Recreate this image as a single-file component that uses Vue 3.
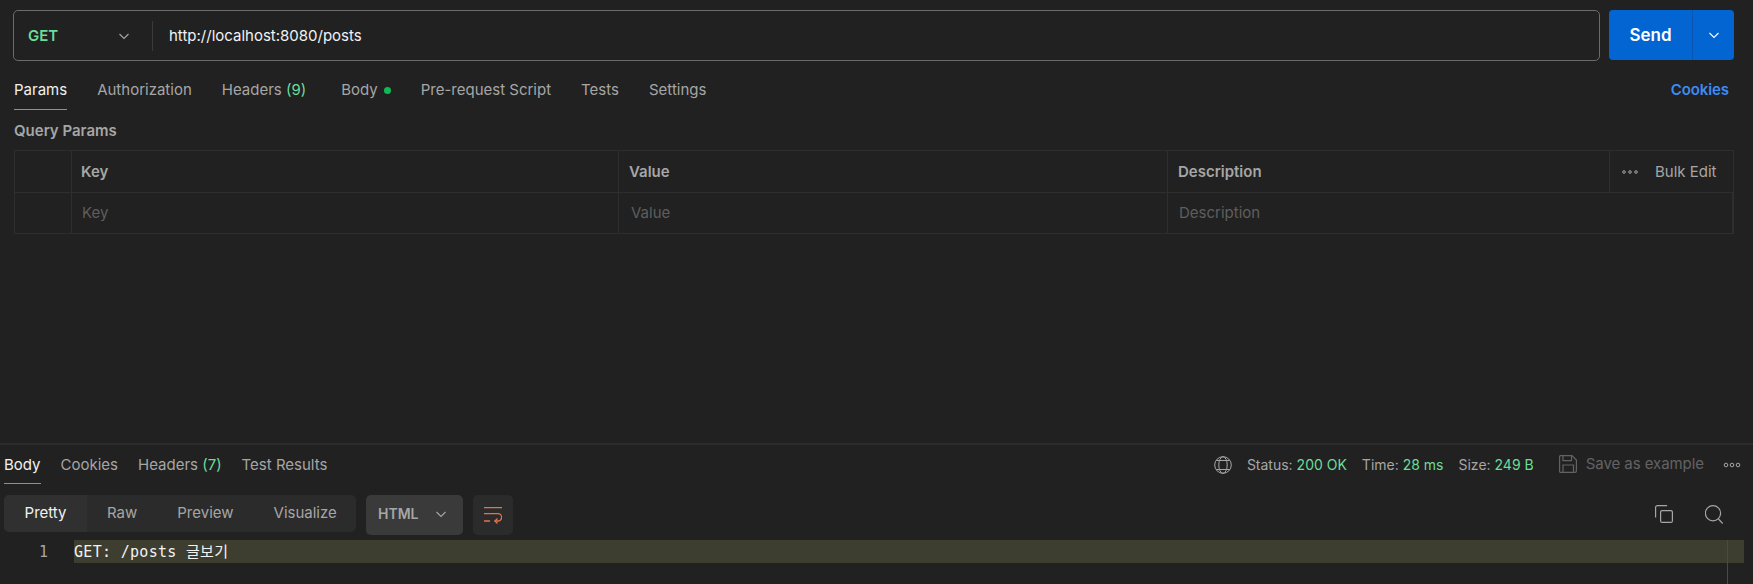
<script setup>
</script>

<template>
  <div class="app">
    <section class="request">
      <div class="urlrow">
        <div class="urlbar">
          <div class="method">
            <span class="get">GET</span>
            <svg class="chev" width="12" height="12" viewBox="0 0 12 12"><path d="M1.5 4l4.500 4.500L10.500 4" fill="none" stroke="#a6a6a6" stroke-width="1.100"/></svg>
          </div>
          <div class="url">http://localhost:8080/posts</div>
        </div>
        <div class="send">
          <span class="sendlabel">Send</span>
          <span class="sendmore"><svg width="12" height="12" viewBox="0 0 12 12"><path d="M1.500 4l4.500 4.500L10.500 4" fill="none" stroke="#fff" stroke-width="1.100"/></svg></span>
        </div>
      </div>

      <div class="reqtabs">
        <span class="tab active">Params</span>
        <span class="tab">Authorization</span>
        <span class="tab hdr">Headers <em>(9)</em></span>
        <span class="tab">Body<i class="dot"></i></span>
        <span class="tab">Pre-request Script</span>
        <span class="tab">Tests</span>
        <span class="tab">Settings</span>
        <span class="cookies">Cookies</span>
      </div>

      <div class="qp">Query Params</div>

      <div class="table">
        <div class="row head">
          <div class="cell c0"></div>
          <div class="cell c1">Key</div>
          <div class="cell c2">Value</div>
          <div class="cell c3">Description</div>
          <div class="cell c4">
            <svg class="dots" width="16" height="4" viewBox="0 0 16 4"><circle cx="2" cy="2" r="1.300"/><circle cx="8" cy="2" r="1.300"/><circle cx="14" cy="2" r="1.300"/></svg>
            <span class="bulk">Bulk Edit</span>
          </div>
        </div>
        <div class="row ph">
          <div class="cell c0"></div>
          <div class="cell c1">Key</div>
          <div class="cell c2">Value</div>
          <div class="cell c3w">Description</div>
        </div>
      </div>
    </section>

    <section class="response">
      <div class="restop">
        <div class="restabs">
          <span class="rtab active">Body</span>
          <span class="rtab">Cookies</span>
          <span class="rtab">Headers <em>(7)</em></span>
          <span class="rtab">Test Results</span>
        </div>
        <div class="stats">
          <svg class="globe" width="18" height="18" viewBox="0 0 18 18" fill="none" stroke="#a6a6a6" stroke-width="1"><circle cx="9" cy="9" r="8.300"/><ellipse cx="9" cy="9" rx="4.200" ry="8.300"/><path d="M2.200 4.500h13.600M2.200 13.500h13.600"/></svg>
          <span class="st">Status: <b>200 OK</b></span>
          <span class="st">Time: <b>28 ms</b></span>
          <span class="st">Size: <b>249 B</b></span>
          <svg class="save" width="18" height="18" viewBox="0 0 18 18" fill="none" stroke="#636363" stroke-width="1.200"><path d="M1.500 .6h11.500l4.400 4.400v11a1.400 1.400 0 0 1-1.400 1.400H1.500A1 1 0 0 1 .6 16.400V1.500A1 1 0 0 1 1.500 .6z"/><path d="M4 .6v5h8.500V.6M4 17.400v-7.400h10.500v7.400"/></svg>
          <span class="saveas">Save as example</span>
          <svg class="dots2" width="18" height="6" viewBox="0 0 18 6"><circle cx="3" cy="3" r="1.800"/><circle cx="9" cy="3" r="1.800"/><circle cx="15" cy="3" r="1.800"/></svg>
        </div>
      </div>

      <div class="toolbar">
        <div class="modes">
          <span class="mode on">Pretty</span>
          <span class="mode raw">Raw</span>
          <span class="mode gapped">Preview</span>
          <span class="mode gapped">Visualize</span>
        </div>
        <div class="lang">HTML<svg width="12" height="12" viewBox="0 0 12 12"><path d="M1.500 4l4.500 4.500L10.500 4" fill="none" stroke="#a6a6a6" stroke-width="1.100"/></svg></div>
        <div class="wrap">
          <svg width="18" height="18" viewBox="0 0 18 18" fill="none" stroke="#e8704a" stroke-width="1.300"><path d="M0 1.700h18M0 7.700h14a2.800 2.800 0 0 1 0 7.300H10.500M0 15h6"/><path d="M13.500 12.500L11 15l2.500 2.500"/></svg>
        </div>
        <div class="tools">
          <svg width="18" height="18" viewBox="0 0 18 18" fill="none" stroke="#a6a6a6" stroke-width="1.200"><rect x="5.600" y="5.600" width="11.800" height="11.800" rx="1.500"/><path d="M.6 12.500V2.600a2 2 0 0 1 2-2h9.500"/></svg>
          <svg width="18" height="19" viewBox="0 0 18 19" fill="none" stroke="#a6a6a6" stroke-width="1.200"><circle cx="8" cy="8.300" r="7.600"/><path d="M13.500 14l4.200 4.500"/></svg>
        </div>
      </div>

      <div class="code">
        <span class="ln">1</span>
        <div class="hl">GET: /posts 글보기<i class="guide"></i></div>
      </div>
    </section>
  </div>
</template>

<style>
html, body { margin: 0; background: #212121; }
</style>

<style scoped>
.app {
  width: 1753px;
  height: 584px;
  overflow: hidden;
  background: #212121;
  font-family: Inter, "Noto Sans CJK KR", sans-serif;
  font-size: 15px;
  color: #a6a6a6;
  display: flex;
  flex-direction: column;
}
.request { height: 443px; padding: 10px 19px 0 13px; box-sizing: border-box; }
.urlrow { display: flex; gap: 9px; height: 51px; }
.urlbar {
  flex: 1; display: flex; align-items: center; box-sizing: border-box;
  border: 1px solid #6b6b6b; border-radius: 5px;
}
.method {
  width: 139px; height: 30px; box-sizing: border-box; border-right: 1px solid #3a3a3a;
  display: flex; align-items: center; justify-content: space-between; padding: 0 22px 0 14px;
}
.get { color: #6bdd9a; font-weight: 600; }
.url { color: #f2f2f2; padding: 0 0 1px 16px; }
.send {
  width: 125px; height: 50px; background: #0265d2; border-radius: 4px; color: #fff;
  display: flex; font-weight: 600; font-size: 17px;
}
.sendlabel { width: 84px; display: flex; align-items: center; justify-content: center; border-right: 1px solid #0a55ad; box-sizing: border-box; }
.sendmore { flex: 1; display: flex; align-items: center; justify-content: center; }

.reqtabs { display: flex; align-items: flex-start; height: 48px; margin-top: 9px; padding-left: 1px; }
.tab { line-height: 39px; height: 39px; margin-right: 30px; white-space: nowrap; }
.tab.active { color: #f2f2f2; border-bottom: 1px solid #e8704a; }
.tab em, .rtab em { font-style: normal; color: #6bdd9a; }
.hdr { margin-right: 35px; }
.dot { display: inline-block; width: 7px; height: 7px; border-radius: 50%; background: #0cbb52; margin-left: 6px; vertical-align: 1px; }
.cookies { margin-left: auto; color: #3d8bf5; font-weight: 600; letter-spacing: -.1px; line-height: 39px; margin-right: 5px; }
.qp { margin: 3px 0 0 1px; font-weight: 600; line-height: 20px; color: #a6a6a6; }
.table { margin-top: 9px; margin-left: 1px; border: 1px solid #2e2e2e; width: 1720px; box-sizing: border-box; }
.row { display: flex; height: 40px; }
.row.head { height: 42px; border-bottom: 1px solid #2e2e2e; box-sizing: border-box; font-weight: 600; }
.row.ph { padding-bottom: 0; }
.cell { display: flex; align-items: center; box-sizing: border-box; padding-left: 10px; border-right: 1px solid #2e2e2e; }
.c0 { width: 57px; }
.c1 { width: 547px; padding-left: 9px; }
.c2 { width: 549px; }
.c3 { width: 442px; }
.c3w { flex: 1; display: flex; align-items: center; padding-left: 11px; }
.c4 { flex: 1; border-right: 0; font-weight: 400; padding-left: 12px; }
.dots { fill: none; stroke: #a6a6a6; stroke-width: 1; }
.bulk { margin-left: 17px; }
.ph { color: #5e5e5e; }
.ph .cell, .ph .c3w { padding-bottom: 2px; }
.ph .c1 { padding-left: 10px; }
.ph .c2 { padding-left: 12px; }

.response { flex: 1; border-top: 2px solid #2b2b2b; padding: 0 0 0 4px; box-sizing: border-box; }
.restop { display: flex; justify-content: space-between; height: 39px; }
.restabs { display: flex; }
.rtab { line-height: 39px; height: 38px; margin-right: 20px; white-space: nowrap; }
.rtab.active { color: #f2f2f2; border-bottom: 1px solid #e8704a; }
.stats { display: flex; align-items: center; padding-right: 12px; }
.st { margin-left: 15px; font-size: 14px; white-space: nowrap; }
.st b { font-weight: 400; color: #6bdd9a; }
.save { margin-left: 25px; margin-top: -2px; }
.saveas { margin-left: 9px; color: #636363; white-space: nowrap; margin-top: -3px; letter-spacing: -.06px; }
.dots2 { margin-left: 19px; fill: none; stroke: #a6a6a6; stroke-width: 1; }

.toolbar { display: flex; align-items: flex-start; margin-top: 11px; height: 40px; }
.modes { display: flex; width: 352px; height: 37px; background: #2b2b2b; border-radius: 5px; line-height: 35px; }
.mode { white-space: nowrap; }
.mode.on { width: 83px; text-align: center; background: #303030; color: #f2f2f2; border-radius: 5px 0 0 5px; }
.mode.raw { margin-left: 20px; }
.mode.gapped { margin-left: 40px; }
.lang {
  width: 97px; height: 40px; margin-left: 10px; background: #3a3a3a; border-radius: 5px; box-sizing: border-box; padding: 0 16px 3px 12px;
  display: flex; align-items: center; justify-content: space-between; font-weight: 600; font-size: 14px;
}
.wrap { width: 40px; height: 40px; margin-left: 10px; background: #2b2b2b; border-radius: 5px; display: flex; align-items: center; justify-content: center; }
.tools { margin-left: auto; display: flex; gap: 32px; padding: 10px 30px 0 0; }

.code { display: flex; margin-top: 5px; height: 44px; font-family: "DejaVu Sans Mono", "Noto Sans CJK KR", monospace; font-size: 15px; }
.ln { width: 70px; text-align: right; padding-right: 26px; box-sizing: border-box; line-height: 25px; }
.hl { flex: 1; height: 23px; line-height: 25px; background: #3d3d30; color: #f2f2f2; margin-right: 9px; position: relative; letter-spacing: .3px; }
.guide { position: absolute; left: 1653px; top: 0; height: 44px; width: 1px; background: #4a4a4a; }
</style>
